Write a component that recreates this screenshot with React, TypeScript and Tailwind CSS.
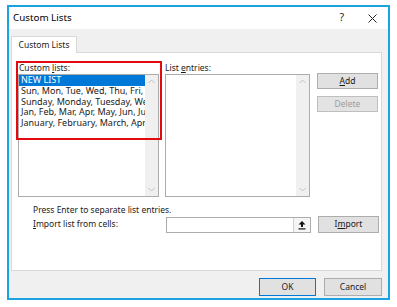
import React from 'react';

const lists = [
    "NEW LIST",
    "Sun, Mon, Tue, Wed, Thu, Fri, Sat",
    "Sunday, Monday, Tuesday, Wednesday",
    "Jan, Feb, Mar, Apr, May, Jun, Jul",
    "January, February, March, April",
];

function ScrollTrack() {
    return (
        <div className="w-[13px] h-full bg-[#f0f0f0] flex flex-col justify-between items-center py-[4px] shrink-0">
            <svg width="7" height="5" viewBox="0 0 7 5"><path d="M0.5 4 L3.5 1 L6.5 4" fill="none" stroke="#c2c2c2" strokeWidth="1" /></svg>
            <svg width="7" height="5" viewBox="0 0 7 5"><path d="M0.5 1 L3.5 4 L6.5 1" fill="none" stroke="#c2c2c2" strokeWidth="1" /></svg>
        </div>
    );
}

function Btn({ children, disabled, primary }: { children: React.ReactNode; disabled?: boolean; primary?: boolean }) {
    return (
        <div className={
            "h-full flex items-center justify-center border " +
            (primary ? "border-[#0078d7] bg-[#e1e1e1] text-[#1a1a1a]" : disabled ? "border-[#bfbfbf] bg-[#e3e3e3] text-[#9c9c9c]" : "border-[#adadad] bg-[#e1e1e1] text-[#1a1a1a]")
        }>
            {children}
        </div>
    );
}

export default function App() {
    return (
        <div className="w-[397px] h-[307px] bg-white pt-[5px] pl-[7px] text-[8.5px] text-[#1a1a1a]" style={{ fontFamily: '"Noto Sans", "Open Sans", sans-serif' }}>
            <div className="w-[383px] h-[295px] border-2 border-[#1aa3e0] bg-[#f0f0f0] flex flex-col">
                {/* title bar */}
                <div className="h-[22px] bg-white flex items-center pl-[4px] pr-[11px] shrink-0">
                    <span className="text-[9.8px] text-black">Custom Lists</span>
                    <span className="ml-auto text-[10.5px] text-[#222]">?</span>
                    <svg className="ml-[24px]" width="9" height="9" viewBox="0 0 9 9"><path d="M0.5 0.5 L8.5 8.5 M8.5 0.5 L0.5 8.5" stroke="#222" strokeWidth="1" /></svg>
                </div>

                <div className="flex-1 flex flex-col pt-[7px] pl-[2px] pr-[6px]">
                    {/* tab */}
                    <div className="flex">
                        <div className="h-[17px] w-[66px] bg-white border border-b-0 border-[#d9d9d9] flex items-center justify-center relative z-10 -mb-px">
                            Custom Lists
                        </div>
                    </div>

                    {/* panel */}
                    <div className="h-[219px] bg-white border border-[#d9d9d9] relative pt-[8px]">
                        <div className="absolute left-[4px] top-[8px] w-[146px] h-[79px] border-2 border-[#e3090e] pointer-events-none" />

                        <div className="flex pl-[6px]">
                            <div className="flex flex-col w-[141px]">
                                <div className="h-[13px] pl-[1px] leading-[13px]">Custom <span className="underline">l</span>ists:</div>
                                <div className="h-[123px] border border-[#acacac] bg-white flex overflow-hidden">
                                    <div className="flex-1 min-w-0 overflow-hidden text-[9px]">
                                        {lists.map((item, i) => (
                                            <div key={item} className={"h-[10.75px] leading-[10.75px] pl-[2px] whitespace-nowrap " + (i === 0 ? "bg-[#0078d7] text-white" : "")}>
                                                {item}
                                            </div>
                                        ))}
                                    </div>
                                    <ScrollTrack />
                                </div>
                            </div>

                            <div className="flex flex-col w-[145px] ml-[6px]">
                                <div className="h-[13px] leading-[13px]">List <span className="underline">e</span>ntries:</div>
                                <div className="h-[123px] border border-[#acacac] bg-white flex justify-end">
                                    <ScrollTrack />
                                </div>
                            </div>

                            <div className="flex flex-col w-[61px] ml-[7px] pt-[12px] gap-[7px]">
                                <div className="h-[16px]"><Btn><span><span className="underline">A</span>dd</span></Btn></div>
                                <div className="h-[16px]"><Btn disabled>Delete</Btn></div>
                            </div>
                        </div>

                        <div className="pl-[21px] mt-[7px] h-[12px] leading-[12px]">Press Enter to separate list entries.</div>
                        <div className="flex items-center pl-[21px]">
                            <div className="w-[133px]"><span className="underline">I</span>mport list from cells:</div>
                            <div className="w-[145px] h-[16px] border border-[#acacac] bg-white flex justify-end">
                                <div className="w-[17px] h-full border-l border-[#d0d0d0] bg-[#f5f5f5] flex items-center justify-center">
                                    <svg width="8" height="10" viewBox="0 0 8 10">
                                        <path d="M4 1 L7.5 4.5 L5 4.5 L5 7 L3 7 L3 4.5 L0.5 4.5 Z" fill="#111" />
                                        <rect x="0.5" y="8.3" width="7" height="1.2" fill="#111" />
                                    </svg>
                                </div>
                            </div>
                            <div className="w-[61px] h-[17px] ml-[7px]"><Btn><span>I<span className="underline">m</span>port</span></Btn></div>
                        </div>
                    </div>

                    {/* footer */}
                    <div className="flex justify-end gap-[8px] mt-[7px]">
                        <div className="w-[57px] h-[18px]"><Btn primary>OK</Btn></div>
                        <div className="w-[58px] h-[18px]"><Btn>Cancel</Btn></div>
                    </div>
                </div>
            </div>
        </div>
    );
}
